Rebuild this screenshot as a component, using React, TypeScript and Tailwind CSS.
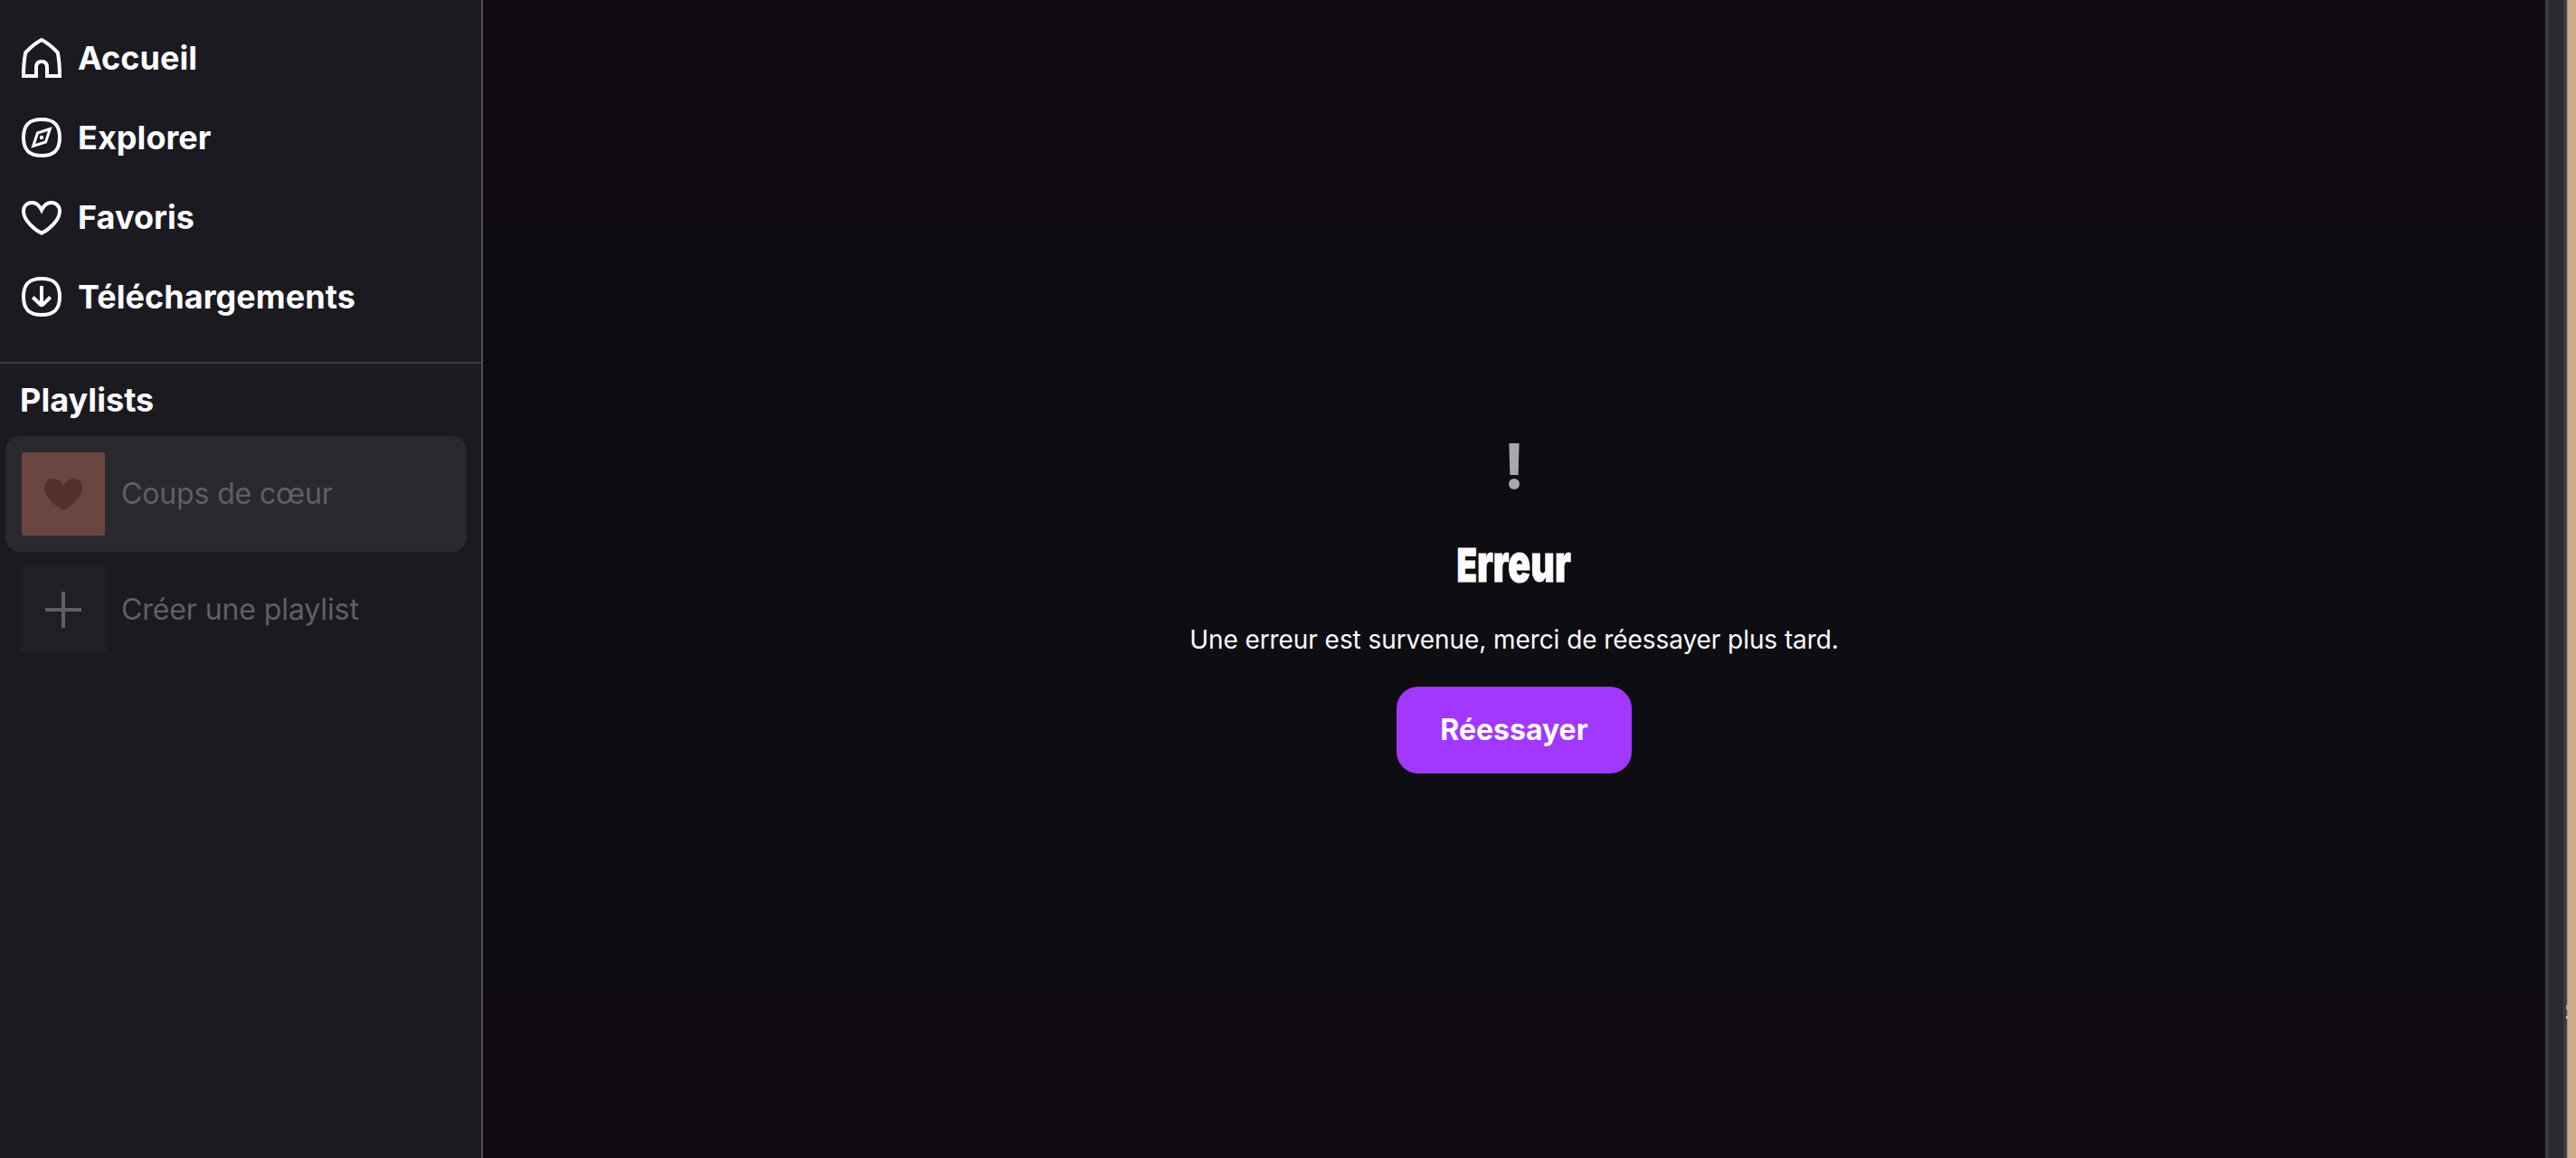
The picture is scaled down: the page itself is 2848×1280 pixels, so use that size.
import React from "react";

const HEART =
  "M18.5 0C15 0 13.2 2.6 12 4.6C10.8 2.6 9 0 5.5 0C1.8 0 0 2.9 0 6.2C0 12 7 18 12 20.6C17 18 24 12 24 6.2C24 2.9 22.2 0 18.5 0Z";

function HomeIcon() {
  return (
    <svg className="size-11" viewBox="0 0 44 44" fill="none" stroke="currentColor" strokeWidth="4">
      <path d="M2 42C2 32 2.7 24 4.2 16.2C8.5 11.5 16 5.2 22 2C28 5.2 35.5 11.5 39.8 16.2C41.3 24 42 32 42 42H28V32.5C28 28.500 26 26 22 26C18 26 16 28.500 16 32.500V42Z" />
    </svg>
  );
}

function CompassIcon() {
  return (
    <svg className="size-11" viewBox="0 0 44 44" fill="none" stroke="currentColor" strokeWidth="4">
      <path d="M22 2C36 2 42 8 42 22C42 36 36 42 22 42C8 42 2 36 2 22C2 8 8 2 22 2Z" />
      <path d="M31.300 12.500L17.500 17L12.700 31.500L26.500 27Z" strokeWidth="3" />
      <circle cx="22" cy="22" r="2.200" fill="currentColor" stroke="none" />
    </svg>
  );
}

function HeartIcon() {
  return (
    <svg className="size-11" viewBox="0 0 44 44" fill="none" stroke="currentColor" strokeWidth="4">
      <path d="M32.500 6C27 6 23.800 10.600 22 14.200C20.200 10.600 17 6 11.500 6C5.300 6 2 10.300 2 15.500C2 25.500 14 36 22 39.800C30 36 42 25.500 42 15.500C42 10.300 38.700 6 32.500 6Z" />
    </svg>
  );
}

function DownloadIcon() {
  return (
    <svg className="size-11" viewBox="0 0 44 44" fill="none" stroke="currentColor" strokeWidth="4">
      <path d="M22 2C36 2 42 8 42 22C42 36 36 42 22 42C8 42 2 36 2 22C2 8 8 2 22 2Z" />
      <path d="M22 10V31M12.300 22.500L20.300 30.300Q22 32 23.700 30.300L31.700 22.500" />
    </svg>
  );
}

const NAV = [
  { label: "Accueil", Icon: HomeIcon },
  { label: "Explorer", Icon: CompassIcon },
  { label: "Favoris", Icon: HeartIcon },
  { label: "Téléchargements", Icon: DownloadIcon },
];

export default function App() {
  return (
    <div className="flex h-[1280px] w-[2848px] overflow-hidden bg-[#0e0d12] font-['Inter',sans-serif] text-[#fdfcfe]">
      <aside className="flex h-full w-[534px] shrink-0 flex-col border-r-2 border-[#504f56] bg-[#1b1a20]">
        <nav className="flex h-[402px] flex-col border-b-2 border-[#3a393f] pt-5">
          {NAV.map(({ label, Icon }) => (
            <a key={label} className="flex h-[88px] items-center gap-[18px] pl-6 text-[36px] font-bold tracking-[0.05px]">
              <Icon />
              <span>{label}</span>
            </a>
          ))}
        </nav>
        <h2 className="flex h-20 items-center pl-[22px] text-[36px] font-bold tracking-[0.05px]">Playlists</h2>
        <div className="ml-1.5 flex h-32 w-[510px] items-center rounded-2xl bg-[#2a292e] pl-[18px] text-[32px] text-[#605f64]">
          <div className="flex size-[92px] items-center justify-center rounded-[2px] bg-[#6b4640]">
            <svg className="h-[35px] w-[42px]" viewBox="0 0 24 20.600" preserveAspectRatio="none" fill="#55302c">
              <path d={HEART} />
            </svg>
          </div>
          <span className="ml-[18px] tracking-[-0.14px]">Coups de cœur</span>
        </div>
        <div className="mt-4 flex h-24 items-center pl-[22px] text-[32px] text-[#605f64]">
          <div className="flex size-24 items-center justify-center bg-[#201f23]">
            <svg className="size-10" viewBox="0 0 40 40" stroke="currentColor" strokeWidth="4">
              <path d="M20 0V40M0 20H40" />
            </svg>
          </div>
          <span className="ml-4 tracking-[-0.1px]">Créer une playlist</span>
        </div>
      </aside>

      <main className="flex h-full w-[2280px] shrink-0 flex-col items-center bg-[linear-gradient(to_bottom,#110c12_0px,#110c12_254px,#0e0d12_254px,#0e0d12_1088px,#110c12_1088px)] pt-[490px]">
        <svg className="h-[51px] w-3" viewBox="0 0 12 51" fill="#a9a8ad">
          <path d="M0.400 0H11.600L10.600 35H1.400Z" />
          <circle cx="6" cy="45" r="6" />
        </svg>
        <h1 className="mt-[52px] h-16 origin-center scale-x-[0.72] whitespace-nowrap text-[51px] font-black leading-[64px] [-webkit-text-stroke:1px_#fdfcfe]">
          E<span className="text-[57px] leading-none">rreur</span>
        </h1>
        <p className="mt-[30px] h-10 text-[28px] leading-10 tracking-[-0.07px]">
          Une erreur est survenue, merci de réessayer plus tard.
        </p>
        <button className="mt-8 h-24 w-[260px] rounded-3xl bg-[#a238ff] text-[32px] font-bold">Réessayer</button>
      </main>

      <div className="h-full w-[23px] shrink-0 border-l-4 border-r-[3px] border-[#3a393f] bg-[#2a292e]" />
      <div className="flex h-full flex-1 flex-col gap-[7px] bg-[linear-gradient(to_right,#4f4845_0px,#4f4845_1px,#a88e77_1px,#a88e77_2px,#cdac8b_2px)] pt-[1111px]">
        <span className="h-[5px] w-0.5 bg-[#aaa5a3]" />
        <span className="h-[3px] w-0.5 bg-[#c4bdb6]" />
      </div>
    </div>
  );
}
